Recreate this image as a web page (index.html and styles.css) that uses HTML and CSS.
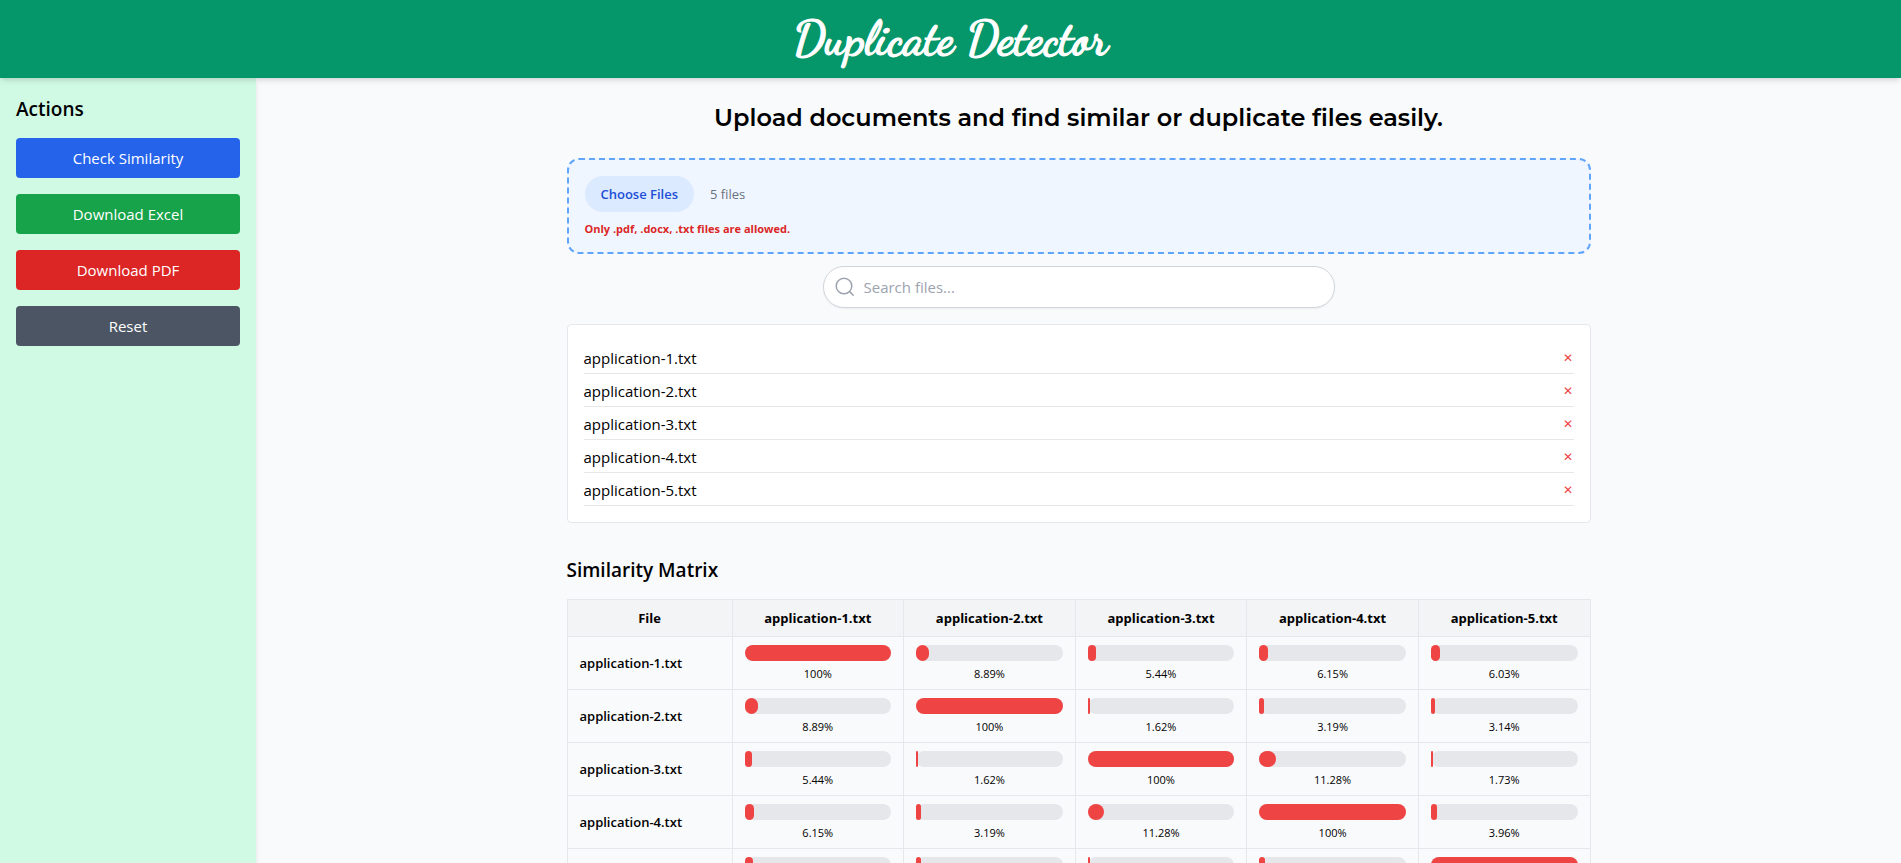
FILE: index.html
```html
<!DOCTYPE html>
<html lang="en">
<head>
<meta charset="utf-8">
<title>Duplicate Detector</title>
<link rel="stylesheet" href="styles.css">
</head>
<body>
<header class="topbar"><h1 class="brand">Duplicate Detector</h1></header>
<div class="layout">
  <aside class="sidebar">
    <h2 class="section-title">Actions</h2>
    <button type="button" class="action blue">Check Similarity</button>
    <button type="button" class="action green">Download Excel</button>
    <button type="button" class="action red">Download PDF</button>
    <button type="button" class="action gray">Reset</button>
  </aside>
  <main class="main">
    <div class="container">
      <h2 class="headline">Upload documents and find similar or duplicate files easily.</h2>
      <div class="dropzone">
        <input type="file" id="files" class="file-input" multiple accept=".pdf,.docx,.txt" aria-label="Documents">
        <p class="hint">Only .pdf, .docx, .txt files are allowed.</p>
      </div>
      <div class="search">
        <svg class="search-icon" viewBox="0 0 20 20" fill="none" stroke="currentColor" stroke-width="1.5" stroke-linecap="round" aria-hidden="true"><circle cx="9" cy="9" r="7.8"/><path d="M14.6 14.6L18.2 18.2"/></svg>
        <input type="search" class="search-input" placeholder="Search files..." aria-label="Search files">
      </div>
      <ul class="file-list">
        <li><span>application-1.txt</span><button type="button" class="remove" aria-label="Remove application-1.txt">✕</button></li>
        <li><span>application-2.txt</span><button type="button" class="remove" aria-label="Remove application-2.txt">✕</button></li>
        <li><span>application-3.txt</span><button type="button" class="remove" aria-label="Remove application-3.txt">✕</button></li>
        <li><span>application-4.txt</span><button type="button" class="remove" aria-label="Remove application-4.txt">✕</button></li>
        <li><span>application-5.txt</span><button type="button" class="remove" aria-label="Remove application-5.txt">✕</button></li>
      </ul>
      <h2 class="section-title">Similarity Matrix</h2>
      <table class="matrix">
        <thead><tr><th class="file-col">File</th><th>application-1.txt</th><th>application-2.txt</th><th>application-3.txt</th><th>application-4.txt</th><th>application-5.txt</th></tr></thead>
        <tbody>
          <tr><th scope="row">application-1.txt</th>
            <td><div class="track"><div class="fill" style="width:100%"></div></div><p>100%</p></td>
            <td><div class="track"><div class="fill" style="width:8.89%"></div></div><p>8.89%</p></td>
            <td><div class="track"><div class="fill" style="width:5.44%"></div></div><p>5.44%</p></td>
            <td><div class="track"><div class="fill" style="width:6.15%"></div></div><p>6.15%</p></td>
            <td><div class="track"><div class="fill" style="width:6.03%"></div></div><p>6.03%</p></td></tr>
          <tr><th scope="row">application-2.txt</th>
            <td><div class="track"><div class="fill" style="width:8.89%"></div></div><p>8.89%</p></td>
            <td><div class="track"><div class="fill" style="width:100%"></div></div><p>100%</p></td>
            <td><div class="track"><div class="fill" style="width:1.62%"></div></div><p>1.62%</p></td>
            <td><div class="track"><div class="fill" style="width:3.19%"></div></div><p>3.19%</p></td>
            <td><div class="track"><div class="fill" style="width:3.14%"></div></div><p>3.14%</p></td></tr>
          <tr><th scope="row">application-3.txt</th>
            <td><div class="track"><div class="fill" style="width:5.44%"></div></div><p>5.44%</p></td>
            <td><div class="track"><div class="fill" style="width:1.62%"></div></div><p>1.62%</p></td>
            <td><div class="track"><div class="fill" style="width:100%"></div></div><p>100%</p></td>
            <td><div class="track"><div class="fill" style="width:11.28%"></div></div><p>11.28%</p></td>
            <td><div class="track"><div class="fill" style="width:1.73%"></div></div><p>1.73%</p></td></tr>
          <tr><th scope="row">application-4.txt</th>
            <td><div class="track"><div class="fill" style="width:6.15%"></div></div><p>6.15%</p></td>
            <td><div class="track"><div class="fill" style="width:3.19%"></div></div><p>3.19%</p></td>
            <td><div class="track"><div class="fill" style="width:11.28%"></div></div><p>11.28%</p></td>
            <td><div class="track"><div class="fill" style="width:100%"></div></div><p>100%</p></td>
            <td><div class="track"><div class="fill" style="width:3.96%"></div></div><p>3.96%</p></td></tr>
          <tr><th scope="row">application-5.txt</th>
            <td><div class="track"><div class="fill" style="width:6.03%"></div></div><p>6.03%</p></td>
            <td><div class="track"><div class="fill" style="width:3.14%"></div></div><p>3.14%</p></td>
            <td><div class="track"><div class="fill" style="width:1.73%"></div></div><p>1.73%</p></td>
            <td><div class="track"><div class="fill" style="width:3.96%"></div></div><p>3.96%</p></td>
            <td><div class="track"><div class="fill" style="width:100%"></div></div><p>100%</p></td></tr>
        </tbody>
      </table>
    </div>
  </main>
</div>
<script src="app.js"></script>
</body>
</html>
```
FILE: styles.css
```css
*, *::before, *::after { box-sizing: border-box; }
body { margin: 0; min-height: 100vh; display: flex; flex-direction: column; background: #f9fafb; color: #000; font: 15px/24px "Segoe UI", "Open Sans", "Noto Sans", sans-serif; }
h1, h2, p, ul { margin: 0; padding: 0; }
button, input { font: inherit; }
button { border: 0; cursor: pointer; }

.topbar { position: relative; z-index: 1; padding: 15px 16px; background: #059669; color: #fff; text-align: center; box-shadow: 0 4px 6px -1px rgba(0,0,0,.1), 0 2px 4px -2px rgba(0,0,0,.1); }
.brand { font: 700 47px/48px "Dancing Script", "Liberation Serif", cursive; -webkit-text-stroke: 1px #fff; }

.layout { flex: 1; display: flex; }
.sidebar { flex: 0 0 256px; padding: 16px; display: flex; flex-direction: column; gap: 16px; background: #d1fae5; box-shadow: 0 4px 6px -1px rgba(0,0,0,.1), 0 2px 4px -2px rgba(0,0,0,.1); }
.section-title { padding-top: 2px; font-size: 19px; line-height: 26px; font-weight: 600; }
.action { width: 100%; padding: 8px 16px; border-radius: 4px; color: #fff; }
.blue { background: #2563eb; }
.green { background: #16a34a; }
.red { background: #dc2626; }
.gray { background: #4b5563; }

.main { flex: 1; padding: 24px; }
.container { max-width: 1024px; margin: 0 auto; }
.headline { margin-bottom: 24px; font: 600 24px/32px Montserrat, Inter, sans-serif; text-align: center; }
.dropzone { padding: 16px; border: 2px dashed #60a5fa; border-radius: 12px; background: #eff6ff; }
.file-input { display: block; width: 100%; color: #6b7280; font-size: 13px; line-height: 20px; }
.file-input::file-selector-button { margin-right: 16px; padding: 8px 16px; border: 0; border-radius: 18px; background: #dbeafe; color: #1d4ed8; font: inherit; font-weight: 600; }
.hint { padding-top: 10px; color: #dc2626; font-size: 11px; line-height: 14px; font-weight: 700; }

.search { position: relative; max-width: 512px; margin: 12px auto 16px; }
.search-icon { position: absolute; left: 12px; top: 11px; width: 20px; height: 20px; color: #9ca3af; }
.search-input { display: block; width: 100%; height: 42px; padding: 8px 16px 8px 40px; border: 1px solid #d1d5db; border-radius: 21px; background: #fff; box-shadow: 0 1px 2px rgba(0,0,0,.05); }
.search-input::placeholder { color: #9ca3af; }

.file-list { margin-bottom: 32px; padding: 16px; border: 1px solid #e5e7eb; border-radius: 4px; background: #fff; list-style: none; }
.file-list li { display: flex; justify-content: space-between; align-items: center; padding: 5px 0 3px; border-bottom: 1px solid #e5e7eb; }
.remove { padding: 0 1px; background: none; color: #ef4444; font-size: 12px; line-height: 24px; }

.matrix { width: 100%; margin-top: 16px; border-collapse: collapse; table-layout: fixed; font-size: 13px; line-height: 20px; }
.matrix th, .matrix td { padding: 8px 12px; border: 1px solid #e5e7eb; }
.matrix thead th { background: #f3f4f6; font-weight: 700; text-align: center; }
.matrix .file-col { width: 165px; }
.matrix tbody th { font-weight: 600; text-align: left; }
.matrix td p { padding-top: 6px; font-size: 11px; line-height: 14px; text-align: center; }
.track { height: 16px; border-radius: 8px; background: #e5e7eb; }
.fill { height: 16px; border-radius: 8px; background: #ef4444; }
```
FILE: app.js
```js
const selection = new DataTransfer();
for (let i = 1; i <= 5; i++) {
  selection.items.add(new File([''], `application-${i}.txt`, { type: 'text/plain' }));
}
document.getElementById('files').files = selection.files;
```
